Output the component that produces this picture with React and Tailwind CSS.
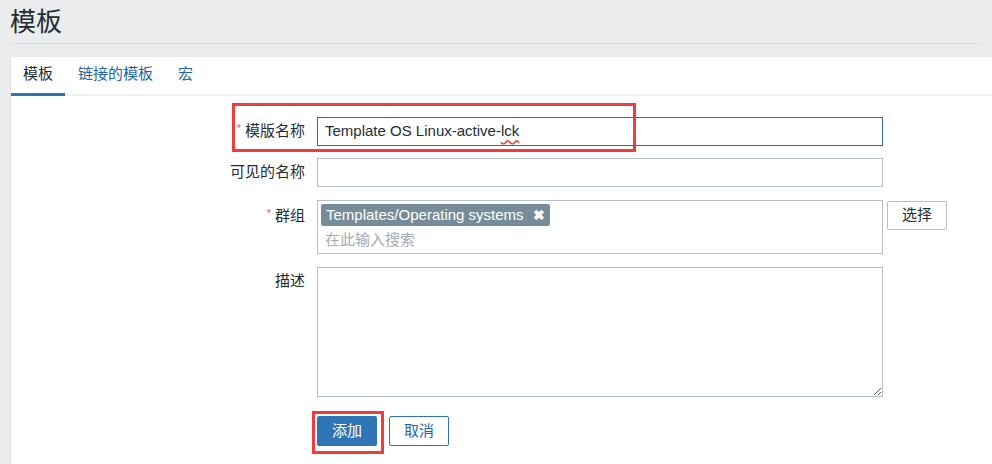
export default function App() {
  const font = { fontFamily: '"Liberation Sans", "Noto Sans CJK SC", sans-serif' };

  return (
    <div className="h-[464px] overflow-hidden bg-[#ebeced] text-[#1f2c33]" style={font}>
      <div className="px-[10px]">
        <h1 className="h-[44px] pt-[5px] text-[26px] leading-[34px] font-normal border-b border-[#dcdfe1]">模板</h1>
      </div>

      <div className="relative ml-[11px] mt-[13px] bg-white h-[420px] shadow-[-1px_0_0_#dfe1e3]">
        <div className="flex h-[39px] items-end border-b-2 border-[#efefef] text-[15px]">
          <div className="w-[54px] h-[38px] -mb-[2px] border-b-[3px] border-[#2f74b5] flex items-center justify-center pb-[2px]">模板</div>
          <div className="ml-[13px] h-[38px] flex items-center pb-[2px] text-[#1f65a6]">链接的模板</div>
          <div className="ml-[25px] h-[38px] flex items-center pb-[2px] text-[#1f65a6]">宏</div>
        </div>

        <div className="pt-[21px] text-[15px]">
          <div className="flex items-center">
            <div className="w-[306px] pr-[12px] text-right"><span className="text-[#e45959] text-[11px] align-top mr-[4px]">*</span>模版名称</div>
            <div className="w-[566px] h-[29px] border border-[#2f6ea5] px-[7px] flex items-center">
              Template OS Linux-active-<span className="underline decoration-wavy decoration-[#e33] underline-offset-[3px]">lck</span>
            </div>
          </div>

          <div className="flex items-center mt-[12px]">
            <div className="w-[306px] pr-[12px] text-right">可见的名称</div>
            <div className="w-[566px] h-[29px] border border-[#b3c0c8]"></div>
          </div>

          <div className="flex items-start mt-[13px]">
            <div className="w-[306px] pr-[12px] text-right pt-[5px]"><span className="text-[#e45959] text-[11px] align-top mr-[4px]">*</span>群组</div>
            <div className="w-[566px] h-[54px] border border-[#b3c0c8] px-[3px] pt-[3px]">
              <div className="inline-flex items-center h-[22px] bg-[#768d99] text-white rounded-[2px] px-[5px] gap-[9px]">
                <span>Templates/Operating systems</span>
                <span className="font-bold text-[14px] leading-none">✖</span>
              </div>
              <div className="px-[4px] pt-[2px] text-[#a3acb1]">在此输入搜索</div>
            </div>
            <button className="ml-[4px] mt-[1px] w-[60px] h-[29px] border border-[#b3c0c8] rounded-[2px] bg-white text-[15px]">选择</button>
          </div>

          <div className="flex items-start mt-[13px]">
            <div className="w-[306px] pr-[12px] text-right pt-[3px]">描述</div>
            <textarea className="w-[566px] h-[130px] border border-[#b3c0c8] outline-none" readOnly></textarea>
          </div>

          <div className="flex mt-[19px] ml-[306px] gap-[12px]">
            <button className="w-[60px] h-[30px] rounded-[2px] bg-[#2f74b5] text-white text-[15px]">添加</button>
            <button className="w-[60px] h-[30px] rounded-[2px] bg-white border border-[#2f74b5] text-[#1f65a6] text-[15px]">取消</button>
          </div>
        </div>

        <div className="absolute left-[221px] top-[46px] w-[404px] h-[49px] border-[3px] border-[#f23b3b]"></div>
        <div className="absolute left-[301px] top-[354px] w-[72px] h-[43px] border-[3px] border-[#f23b3b]"></div>
      </div>
    </div>
  );
}
